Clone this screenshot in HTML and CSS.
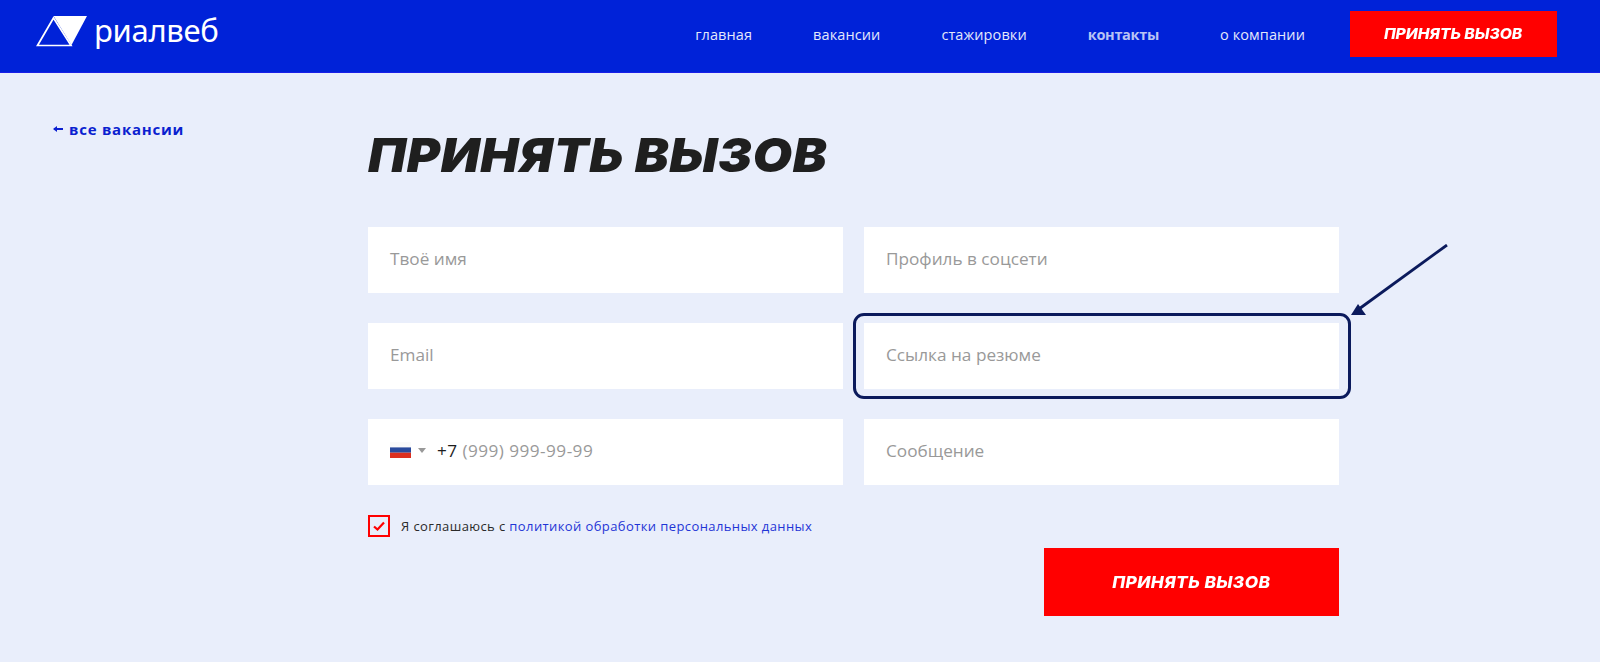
FILE: index.html
```html
<!DOCTYPE html>
<html lang="ru">
<head>
  <meta charset="UTF-8">
  <title>Принять вызов</title>
  <link rel="stylesheet" href="styles.css">
</head>
<body>

<header class="top-bar">
  <a class="logo" href="#">
    <svg class="logo-icon" width="52" height="31" viewBox="0 0 52 31">
      <path d="M17.5 2 L35 29.5 L1.5 29.5 Z" fill="none" stroke="#fff" stroke-width="1.7"/>
      <path d="M17.5 0 L51 0 L35.5 29 Z" fill="#fff"/>
    </svg>
    <span class="logo-text">риалвеб</span>
  </a>
  <nav class="main-nav">
    <a href="#">главная</a>
    <a href="#">вакансии</a>
    <a href="#">стажировки</a>
    <a href="#" class="active">контакты</a>
    <a href="#">о компании</a>
  </nav>
  <a class="red-btn red-btn-small" href="#"><span>ПРИНЯТЬ ВЫЗОВ</span></a>
</header>

<main class="content">
  <a class="back-link" href="#"><span class="back-arrow"></span>все вакансии</a>

  <section class="form-block">
    <h1>ПРИНЯТЬ ВЫЗОВ</h1>
    <div class="form-grid">
      <div class="field">Твоё имя</div>
      <div class="field">Профиль в соцсети</div>
      <div class="field">Email</div>
      <div class="field field-marked">Ссылка на резюме
        <svg class="pointer" width="110" height="82" viewBox="0 0 110 82">
          <path d="M108 1 L20 65" fill="none" stroke="#0b1a5c" stroke-width="2.8"/>
          <path d="M12 71 L19 60 L27 71 Z" fill="#0b1a5c"/>
        </svg>
      </div>
      <div class="field phone">
        <svg class="flag" width="21" height="16" viewBox="0 0 21 16">
          <rect width="21" height="5.4" fill="#fafafa"/>
          <rect y="5.4" width="21" height="5.3" fill="#2a4a9c"/>
          <rect y="10.7" width="21" height="5.3" fill="#dc2f1f"/>
        </svg>
        <span class="caret"></span>
        <span class="phone-code">+7</span>&nbsp;(999) 999-99-99
      </div>
      <div class="field">Сообщение</div>
    </div>

    <div class="agree-row">
      <label class="agree">
        <span class="check-box">
          <svg width="14" height="12" viewBox="0 0 14 12">
            <path d="M2 6.5 L5.5 9.5 L12 2.5" fill="none" stroke="#f00" stroke-width="2.2"/>
          </svg>
        </span>
        <span>Я соглашаюсь с <a href="#">политикой обработки персональных данных</a></span>
      </label>
    </div>

    <div class="submit-row">
      <a class="red-btn red-btn-big" href="#"><span>ПРИНЯТЬ ВЫЗОВ</span></a>
    </div>
  </section>
</main>

</body>
</html>
```

FILE: styles.css
```css
* {
  box-sizing: border-box;
}
html, body {
  height: 100%;
}
body {
  margin: 0;
  font-family: "Open Sans", "Noto Sans", Arial, sans-serif;
  background: #e9eefb;
  color: #1d1d1d;
  overflow: hidden;
}
a {
  text-decoration: none;
}
.top-bar {
  display: flex;
  align-items: center;
  height: 73px;
  padding: 0 43px 0 36px;
  background: #0022d8;
  border-bottom: 1px solid #1a1fe8;
}
.logo {
  display: flex;
  align-items: flex-start;
  gap: 6px;
  height: 73px;
  padding-top: 16px;
  color: #fff;
}
.logo-text {
  font-family: "Noto Sans", sans-serif;
  font-size: 31px;
  font-weight: 400;
  line-height: 29px;
  letter-spacing: -0.3px;
}
.main-nav {
  display: flex;
  gap: 61px;
  margin-left: auto;
  margin-right: 45px;
  padding-bottom: 3px;
}
.main-nav a {
  color: #e4e8fb;
  font-size: 14.5px;
  letter-spacing: 0.1px;
}
.main-nav a.active {
  color: #b9c4f4;
  font-weight: 700;
  letter-spacing: -0.3px;
}
.red-btn {
  display: flex;
  align-items: center;
  justify-content: center;
  background: #f00;
  color: #fff;
  font-family: Inter, sans-serif;
  font-weight: 800;
  font-style: italic;
}
.red-btn span {
  transform: scaleX(1.08);
}
.red-btn-small {
  width: 207px;
  height: 46px;
  margin-top: -5px;
  font-size: 14.5px;
}
.red-btn-big {
  width: 295px;
  height: 68px;
  font-size: 16px;
  letter-spacing: 0.4px;
}
.content {
  display: flex;
  padding: 49px 0 0 54px;
}
.back-link {
  display: flex;
  align-items: center;
  gap: 6px;
  width: 314px;
  height: 20px;
  margin-top: -3px;
  color: #0b1fd0;
  font-size: 15px;
  font-weight: 700;
  letter-spacing: 0.75px;
}
.back-arrow {
  position: relative;
  width: 9px;
  height: 2px;
  background: #0b1fd0;
}
.back-arrow::before {
  content: "";
  position: absolute;
  left: -1px;
  top: -2px;
  border-style: solid;
  border-width: 3px 4px 3px 0;
  border-color: transparent #0b1fd0 transparent transparent;
}
.form-block {
  width: 971px;
}
h1 {
  margin: 0 0 43px;
  height: 62px;
  color: #1f1f1f;
  font-family: Inter, sans-serif;
  font-size: 47px;
  font-weight: 900;
  font-style: italic;
  line-height: 66px;
  white-space: nowrap;
  letter-spacing: 0.6px;
  transform: scaleX(1.08);
  transform-origin: left;
}
.form-grid {
  display: grid;
  grid-template-columns: 475px 475px;
  gap: 30px 21px;
}
.field {
  position: relative;
  display: flex;
  align-items: center;
  height: 66px;
  padding: 0 22px 4px;
  background: #fff;
  color: #999;
  font-size: 17.2px;
}
.field-marked::after {
  content: "";
  position: absolute;
  inset: -10px -12px -10px -11px;
  border: 3px solid #0b1a5c;
  border-radius: 11px;
}
.pointer {
  position: absolute;
  right: -110px;
  top: -79px;
}
.phone {
  letter-spacing: 0.45px;
}
.flag {
  margin-right: 7px;
  filter: blur(0.4px);
}
.caret {
  width: 0;
  height: 0;
  margin-right: 11px;
  border-style: solid;
  border-width: 5px 4.5px 0;
  border-color: #999 transparent transparent;
}
.phone-code {
  color: #1d1d1d;
}
.agree-row {
  margin-top: 30px;
}
.agree {
  display: flex;
  align-items: center;
  gap: 11px;
  font-size: 13px;
  letter-spacing: 0.4px;
  color: #2a2a2a;
}
.agree a {
  color: #1f35d6;
}
.check-box {
  display: flex;
  align-items: center;
  justify-content: center;
  width: 22px;
  height: 22px;
  border: 2px solid #f00;
}
.submit-row {
  display: flex;
  justify-content: flex-end;
  margin-top: 11px;
}
```
